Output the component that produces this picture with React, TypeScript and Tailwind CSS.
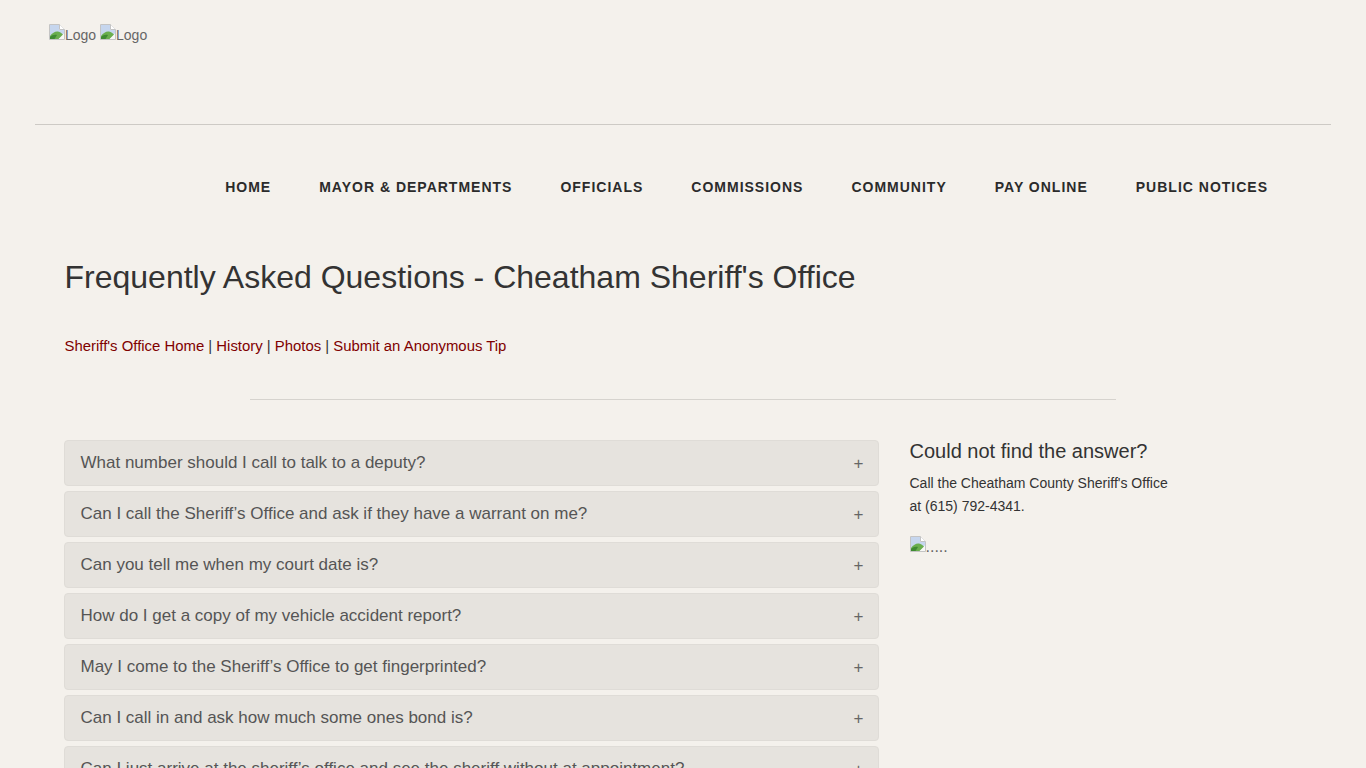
import React from "react";

const navItems = ["HOME", "MAYOR & DEPARTMENTS", "OFFICIALS", "COMMISSIONS", "COMMUNITY", "PAY ONLINE", "PUBLIC NOTICES"];

const faqs = [
    "What number should I call to talk to a deputy?",
    "Can I call the Sheriff’s Office and ask if they have a warrant on me?",
    "Can you tell me when my court date is?",
    "How do I get a copy of my vehicle accident report?",
    "May I come to the Sheriff’s Office to get fingerprinted?",
    "Can I call in and ask how much some ones bond is?",
    "Can I just arrive at the sheriff’s office and see the sheriff without at appointment?",
];

const links = ["Sheriff's Office Home", "History", "Photos", "Submit an Anonymous Tip"];

// chrome's broken image placeholder
const BrokenImage = () => (
    <svg width="16" height="16" viewBox="0 0 16 16" className="inline align-baseline">
        <path d="M0.5 0.5H10.5L15.5 5.5V15.5H0.5Z" fill="#f4f6f8" stroke="#c4c4c4" />
        <path d="M1 1H10V6H15V9.5L9 12L1 12Z" fill="#c6d6ee" />
        <path d="M1 15V12C3.5 8.5 6.5 7 9 7.5C11 8 13 9.5 14 10.5L9.5 15Z" fill="#6aae4e" />
        <path d="M1 15V13C3 11 5.5 10.5 8 11L5.5 15Z" fill="#3f8a33" />
        <path d="M10.5 0.5V5.5H15.5" fill="#ffffff" stroke="#c4c4c4" />
        <path d="M10 15L15 10.5V15Z" fill="#f7f7f5" />
    </svg>
);

const App = () => {
    return (
        <div className="h-[768px] overflow-hidden bg-[#f4f1ec] font-['Liberation_Sans',Arial,sans-serif] text-[#333]">
            <header className="px-[35px]">
                <div className="h-[124px] pl-[14px] pt-[24px] text-[14px] leading-[18px] text-[#666]">
                    <BrokenImage />Logo <BrokenImage />Logo
                </div>
                <hr className="border-t border-[#cdcac5]" />
            </header>

            <nav className="mt-[54px] flex justify-end gap-[48px] pr-[98px]">
                {navItems.map((item) => (
                    <a key={item} className="text-[14px] font-bold leading-[16px] tracking-[1px] text-[#2b2b2b]">{item}</a>
                ))}
            </nav>

            <main className="px-[64px]">
                <h1 className="ml-[0.5px] mt-[64px] text-[32px] leading-[36px] text-[#333]">
                    Frequently Asked Questions - Cheatham Sheriff's Office
                </h1>
                <div className="ml-[0.5px] mt-[41px] text-[14.9px] leading-[20px] text-[#333]">
                    {links.map((link, i) => (
                        <span key={link}>
                            {i > 0 && " | "}
                            <a className="text-[#800000]">{link}</a>
                        </span>
                    ))}
                </div>
                <hr className="mx-auto mt-[43px] w-[866px] border-t border-[#d6d3ce]" />

                <div className="mt-[40px] flex items-start">
                    <div className="flex w-[815px] shrink-0 flex-col gap-[5px]">
                        {faqs.map((faq) => (
                            <div key={faq} className="flex h-[46px] items-center justify-between rounded-[4px] border border-[#dfdcd7] bg-[#e6e3de] pl-[15.5px] pr-[14.5px] text-[17px] text-[#555]">
                                <span>{faq}</span>
                                <span className="text-[17px] font-light leading-none text-[#666]">+</span>
                            </div>
                        ))}
                    </div>
                    <aside className="ml-[30.5px] w-[270px]">
                        <h3 className="text-[20px] leading-[22px] text-[#333]">Could not find the answer?</h3>
                        <p className="mt-[10px] text-[14px] leading-[23px] text-[#333]">
                            Call the Cheatham County Sheriff's Office<br />at (615) 792-4341.
                        </p>
                        <div className="mt-[17px] text-[16px] leading-[24px] text-[#666]"><BrokenImage />.....</div>
                    </aside>
                </div>
            </main>
        </div>
    );
};

export default App;
